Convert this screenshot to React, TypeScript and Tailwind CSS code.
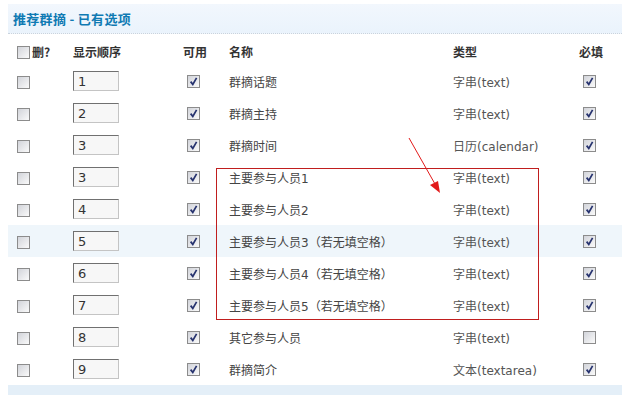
import React from "react";

const CJK = { fontFamily: '"Noto Sans CJK SC", sans-serif' };
const MIX = { fontFamily: '"DejaVu Sans", "Noto Sans CJK SC", sans-serif' };

function Box({ checked }: { checked?: boolean }) {
  return (
    <span className="inline-flex w-[13px] h-[13px] border border-[#8c8c8c] bg-gradient-to-br from-[#d2d4da] to-[#fafafa] items-center justify-center shrink-0">
      {checked && (
        <svg width="11" height="11" viewBox="0 0 11 11">
          <path d="M2.6 5.6 L4.8 8.4 L8.6 1.8" fill="none" stroke="#27336f" strokeWidth="1.7" />
        </svg>
      )}
    </span>
  );
}

type Row = { n: string; name: string; type: string; req: boolean; hl?: boolean };

const rows: Row[] = [
  { n: "1", name: "群摘话题", type: "字串(text)", req: true },
  { n: "2", name: "群摘主持", type: "字串(text)", req: true },
  { n: "3", name: "群摘时间", type: "日历(calendar)", req: true },
  { n: "3", name: "主要参与人员1", type: "字串(text)", req: true },
  { n: "4", name: "主要参与人员2", type: "字串(text)", req: true },
  { n: "5", name: "主要参与人员3（若无填空格）", type: "字串(text)", req: true, hl: true },
  { n: "6", name: "主要参与人员4（若无填空格）", type: "字串(text)", req: true },
  { n: "7", name: "主要参与人员5（若无填空格）", type: "字串(text)", req: true },
  { n: "8", name: "其它参与人员", type: "字串(text)", req: false },
  { n: "9", name: "群摘简介", type: "文本(textarea)", req: true },
];

const cols = "grid grid-cols-[65px_110px_46px_224px_126px_1fr]";

export default function App() {
  return (
    <div className="relative w-[622px] h-[395px] bg-white overflow-hidden">
      <div className="pt-[4px] pl-[8px]">
        <div className="h-[30px] bg-gradient-to-b from-[#f2f7fd] to-[#eaf3fc] border-b border-dotted border-[#c9d3dd] flex items-center pl-[5px] pt-[1px]">
          <span className="text-[13px] font-bold text-[#0f7ab3] tracking-[0.3px]" style={CJK}>
            推荐群摘 - 已有选项
          </span>
        </div>
        <div className={`${cols} h-[31px] pt-[5px] items-center text-[12px] font-bold text-[#333]`} style={CJK}>
          <div className="flex items-center pl-[9px] gap-[2px]">
            <Box />
            <span>删?</span>
          </div>
          <div>显示顺序</div>
          <div>可用</div>
          <div>名称</div>
          <div>类型</div>
          <div>必填</div>
        </div>
        {rows.map((r, i) => (
          <div
            key={i}
            className={`${cols} h-[32px] items-center text-[12px] text-[#444] ${r.hl ? "bg-[#eff6fb]" : ""}`}
            style={MIX}
          >
            <div className="flex items-center pl-[9px] pt-[2px]">
              <Box />
            </div>
            <div className="flex items-center">
              <div
                className="w-[46px] h-[20px] border border-t-[#707070] border-l-[#707070] border-r-[#c4c4c4] border-b-[#c4c4c4] bg-[#f7f7f7] text-[13px] text-[#333] leading-[19px] pl-[4px]"
                style={MIX}
              >
                {r.n}
              </div>
            </div>
            <div className="flex items-center pl-[4px] pt-[1px]">
              <Box checked />
            </div>
            <div className="whitespace-nowrap pt-[3px]">{r.name}</div>
            <div className="whitespace-nowrap text-[#555] pt-[3px]">{r.type}</div>
            <div className="flex items-center pl-[4px] pt-[1px]">
              <Box checked={r.req} />
            </div>
          </div>
        ))}
        <div className="h-[10px] bg-[#e4eff8]" />
      </div>

      <div className="absolute left-[216px] top-[168px] w-[323px] h-[152px] border border-[#c01e1e]" />
      <svg className="absolute left-0 top-0" width="622" height="395" viewBox="0 0 622 395">
        <line x1="409" y1="138" x2="435" y2="184" stroke="#e21a1a" strokeWidth="1" />
        <polygon points="440,193 430,185 438,181" fill="#e21a1a" />
      </svg>
    </div>
  );
}
